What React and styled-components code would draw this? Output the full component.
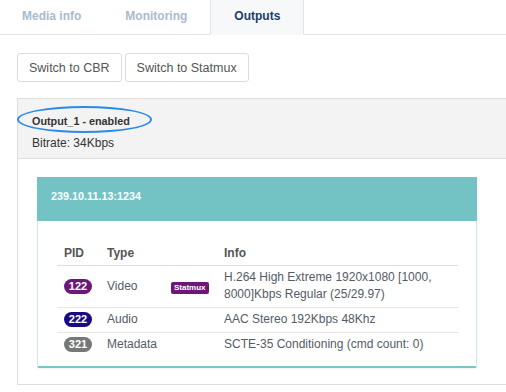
import React from 'react'
import styled, { createGlobalStyle } from 'styled-components';

const GlobalStyle = createGlobalStyle`
    html, body {
        margin: 0;
        padding: 0;
        background: #fff;
        overflow: hidden;
        font-family: "Liberation Sans", Arial, sans-serif;
    }
`;

const Tabs = styled.div`
    display: flex;
    height: 34px;
    border-bottom: 1px solid #e4e4e4;
`;

const Tab = styled.div`
    height: 35px;
    line-height: 33px;
    padding: 0 21px;
    margin-bottom: -1px;
    box-sizing: border-box;
    font-size: 12px;
    font-weight: bold;
    border: 1px solid ${p => (p.$active ? '#e4e4e4' : 'transparent')};
    border-top: none;
    border-bottom-color: ${p => (p.$active ? '#f6f8fa' : 'transparent')};
    background: ${p => (p.$active ? '#f6f8fa' : 'transparent')};
    color: ${p => (p.$active ? '#1e3c6c' : '#a9bbd0')};
    ${p => p.$active && 'padding: 0 23px; margin-left: 1px;'}
`;

const Content = styled.div`
    padding: 18px 0 0 17px;
`;

const ButtonRow = styled.div`
    display: flex;
    gap: 3px;
    margin-bottom: 16px;
`;

const Button = styled.button`
    height: 29px;
    padding: 0 11px;
    background: #fff;
    border: 1px solid #dcdcdc;
    border-radius: 3px;
    font-family: "Liberation Sans", Arial, sans-serif;
    font-size: 12.5px;
    color: #555;
`;

const Panel = styled.div`
    width: 520px;
    border: 1px solid #dedede;
    background: #fff;
`;

const PanelHeader = styled.div`
    background: #f3f3f3;
    border-bottom: 1px solid #dedede;
    padding: 12px 14px 10px;
    height: 60px;
    box-sizing: border-box;
`;

const TitleWrap = styled.div`
    position: relative;
    display: inline-block;
    font-size: 10.8px;
    font-weight: bold;
    color: #333;
    line-height: 14px;
`;

const Circle = styled.span`
    position: absolute;
    left: -15px;
    top: -8px;
    width: 131px;
    height: 23px;
    border: 2px solid #2b8ae8;
    border-radius: 50%;
`;

const Bitrate = styled.div`
    margin-top: 7px;
    font-size: 12px;
    color: #333;
`;

const PanelBody = styled.div`
    padding: 18px 0 16px 19px;
`;

const Card = styled.div`
    width: 440px;
    box-sizing: border-box;
    border: 1px solid #d3e6e6;
    border-bottom: 2px solid #7cc5c7;
    border-radius: 2px;
    box-shadow: 0 1px 2px rgba(0, 0, 0, 0.06);
`;

const CardHeader = styled.div`
    height: 44px;
    box-sizing: border-box;
    background: #73c3c5;
    padding: 13px 14px 0;
    font-size: 10.8px;
    font-weight: bold;
    color: #fff;
    margin: -1px -1px 0;
`;

const CardBody = styled.div`
    padding: 19px 19px 9px 19px;
`;

const Table = styled.table`
    width: 401px;
    table-layout: fixed;
    border-collapse: collapse;
    font-size: 12px;
    color: #555b66;
    th {
        text-align: left;
        font-weight: bold;
        color: #555;
        padding: 6px 7px 5px;
        border-bottom: 1px solid #dddddd;
    }
    td {
        padding: 3px 7px 4px;
        line-height: 17px;
        vertical-align: middle;
    }
    tbody tr + tr td {
        border-top: 1px solid #e6e6e6;
    }
`;

const Pid = styled.span`
    display: inline-block;
    width: 28px;
    height: 15px;
    line-height: 15px;
    border-radius: 8px;
    text-align: center;
    font-size: 11px;
    font-weight: bold;
    color: #fff;
    background: ${p => p.$color};
`;

const Statmux = styled.span`
    display: inline-block;
    padding: 0 3px;
    height: 12px;
    line-height: 12px;
    border-radius: 2px;
    font-size: 8px;
    font-weight: bold;
    color: #fff;
    background: #6c1879;
`;

const rows = [
    { pid: 122, color: '#6c1879', type: 'Video', statmux: true, info: 'H.264 High Extreme 1920x1080 [1000, 8000]Kbps Regular (25/29.97)' },
    { pid: 222, color: '#1c0a82', type: 'Audio', info: 'AAC Stereo 192Kbps 48Khz' },
    { pid: 321, color: '#777777', type: 'Metadata', info: 'SCTE-35 Conditioning (cmd count: 0)' },
];

export default function App() {
    return (
        <>
        <GlobalStyle />
        <Tabs>
            <Tab>Media info</Tab>
            <Tab>Monitoring</Tab>
            <Tab $active>Outputs</Tab>
        </Tabs>
        <Content>
            <ButtonRow>
                <Button>Switch to CBR</Button>
                <Button>Switch to Statmux</Button>
            </ButtonRow>
            <Panel>
                <PanelHeader>
                    <TitleWrap>
                        Output_1 - enabled
                        <Circle />
                    </TitleWrap>
                    <Bitrate>Bitrate: 34Kbps</Bitrate>
                </PanelHeader>
                <PanelBody>
                    <Card>
                        <CardHeader>239.10.11.13:1234</CardHeader>
                        <CardBody>
                            <Table>
                                <colgroup>
                                    <col style={{ width: 43 }} />
                                    <col style={{ width: 64 }} />
                                    <col style={{ width: 53 }} />
                                    <col />
                                </colgroup>
                                <thead>
                                    <tr>
                                        <th>PID</th>
                                        <th>Type</th>
                                        <th></th>
                                        <th>Info</th>
                                    </tr>
                                </thead>
                                <tbody>
                                    {rows.map(r => (
                                        <tr key={r.pid}>
                                            <td><Pid $color={r.color}>{r.pid}</Pid></td>
                                            <td>{r.type}</td>
                                            <td>{r.statmux && <Statmux>Statmux</Statmux>}</td>
                                            <td>{r.info}</td>
                                        </tr>
                                    ))}
                                </tbody>
                            </Table>
                        </CardBody>
                    </Card>
                </PanelBody>
            </Panel>
        </Content>
        </>
    );
}
